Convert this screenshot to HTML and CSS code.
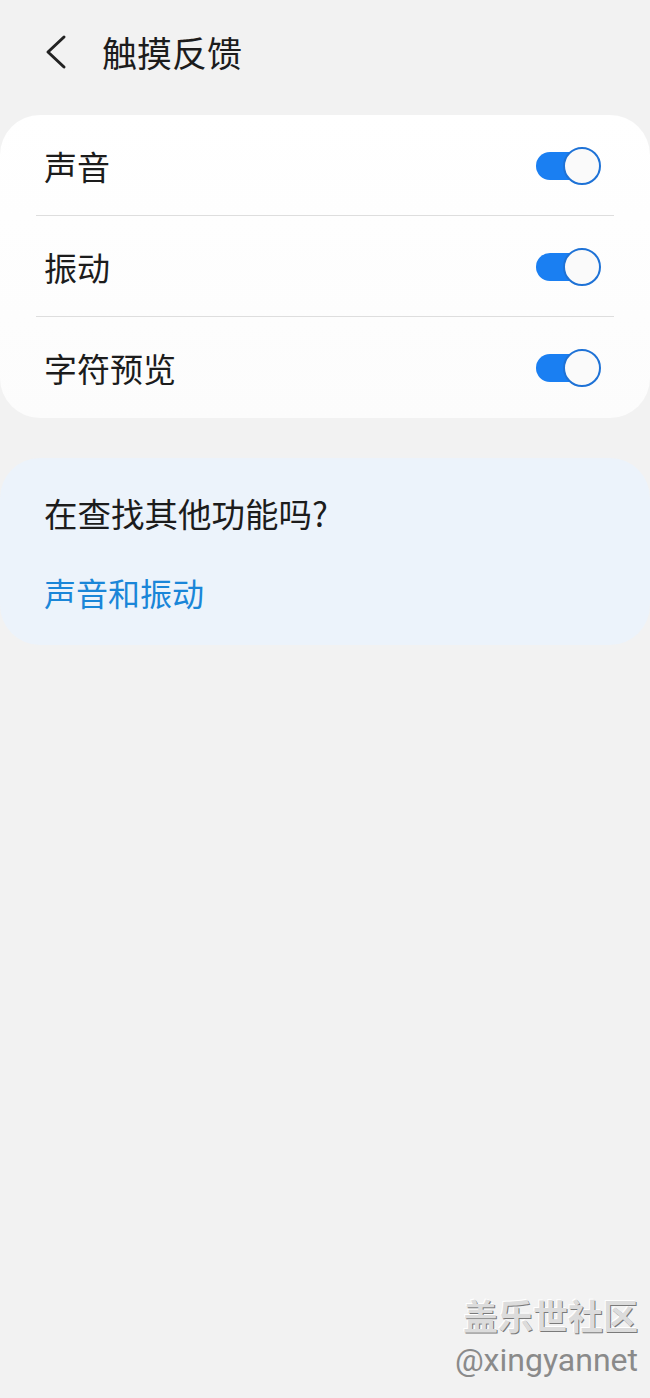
FILE: index.html
```html
<!DOCTYPE html>
<html lang="zh-CN">
<head>
<meta charset="utf-8">
<title>触摸反馈</title>
<link rel="stylesheet" href="styles.css">
</head>
<body>
<div class="page">
  <header class="header">
    <svg class="back" width="24" height="36" viewBox="0 0 24 36">
      <path d="M20 3 L4 18 L20 33" fill="none" stroke="#222" stroke-width="3" stroke-linecap="round" stroke-linejoin="round"/>
    </svg>
    <h1 class="title">触摸反馈</h1>
  </header>

  <section class="card">
    <div class="row">
      <span class="label">声音</span>
      <span class="switch"><span class="knob"></span></span>
    </div>
    <div class="divider"></div>
    <div class="row">
      <span class="label">振动</span>
      <span class="switch"><span class="knob"></span></span>
    </div>
    <div class="divider"></div>
    <div class="row">
      <span class="label">字符预览</span>
      <span class="switch"><span class="knob"></span></span>
    </div>
  </section>

  <section class="card suggest">
    <div class="suggest-title">在查找其他功能吗?</div>
    <div class="suggest-link">声音和振动</div>
  </section>

  <div class="watermark">
    <div class="wm-cn">盖乐世社区</div>
    <div class="wm-en">@xingyannet</div>
  </div>
</div>
</body>
</html>
```

FILE: styles.css
```css
* { box-sizing: border-box; }
html, body {
  margin: 0;
  padding: 0;
  background: #f2f2f2;
}
body {
  font-family: "Noto Sans CJK SC", "Noto Sans", sans-serif;
  color: #1c1c1c;
}
.page {
  position: relative;
  width: 650px;
  height: 1398px;
  overflow: hidden;
}
.header {
  height: 104px;
  display: flex;
  align-items: center;
  padding-left: 44px;
}
.back {
  display: block;
  margin-right: 34px;
}
.title {
  margin: 0;
  font-size: 35px;
  font-weight: 400;
  line-height: 40px;
  color: #1c1c1c;
}
.card {
  margin-top: 11px;
  background: linear-gradient(#ffffff, #fcfcfc);
  border-radius: 40px;
}
.row {
  height: 101px;
  display: flex;
  align-items: center;
  justify-content: space-between;
  padding: 0 49px 0 44px;
}
.label {
  font-size: 33px;
  line-height: 40px;
}
.divider {
  height: 1px;
  background: #dedede;
  margin: 0 36px;
  margin-top: -1px;
}
.switch {
  position: relative;
  width: 65px;
  height: 38px;
  display: block;
}
.switch::before {
  content: "";
  position: absolute;
  left: 0;
  top: 5px;
  width: 56px;
  height: 28px;
  border-radius: 14px;
  background: #1a7ff2;
}
.knob {
  position: absolute;
  right: 0;
  top: 0;
  width: 38px;
  height: 38px;
  border-radius: 50%;
  background: #fafafa;
  border: 2px solid #1e72d6;
}
.suggest {
  margin-top: 40px;
  background: #ecf3fb;
  height: 187px;
  padding: 35px 44px 0 44px;
}
.suggest-title {
  font-size: 33.5px;
  line-height: 40px;
  color: #1c1c1c;
}
.suggest-link {
  margin-top: 39px;
  font-size: 32px;
  line-height: 40px;
  color: #1a86d8;
}
.watermark {
  position: absolute;
  right: 12px;
  top: 1292px;
  text-align: right;
}
.wm-cn {
  font-size: 35px;
  line-height: 46px;
  font-weight: 700;
  color: #dcdcdc;
  text-shadow: 1px 1px 0 #7a7a7a, -1px -1px 0 #ffffff;
}
.wm-en {
  font-family: "Roboto", "Liberation Sans", sans-serif;
  font-size: 32px;
  line-height: 44px;
  color: #8a8a8a;
}
```
